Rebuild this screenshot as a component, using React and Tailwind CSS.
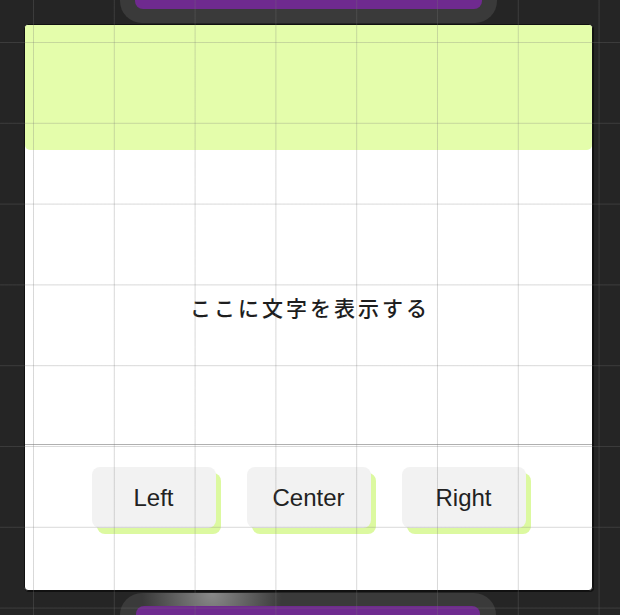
export default function App() {
  const buttons = ['Left', 'Center', 'Right'];
  return (
    <div className="relative h-[615px] w-[620px] overflow-hidden bg-[#252525]">
      <div className="flex flex-col">
        {/* top dock pill */}
        <div className="ml-[120px] h-[23px] w-[377px] rounded-b-[22px] bg-[#3a3a3a] px-[15px]">
          <div className="h-[9px] w-full rounded-b-[8px] bg-[#6f2a8f]" />
        </div>

        {/* card */}
        <div className="ml-[24px] mt-[1px] flex h-[567px] w-[569px] flex-col overflow-hidden rounded-[4px] border border-[#111] bg-white shadow-[1px_1px_0_#111]">
          <div className="h-[125px] shrink-0 rounded-b-[5px] bg-[#e4fdab]" />
          <div className="flex h-[294px] shrink-0 justify-center pt-[143px] pl-[3px]">
            <p className="text-[21px] leading-[28px] font-medium tracking-[3px] text-[#1e1e1e] [font-family:'Noto_Sans_CJK_JP',sans-serif]">
              ここに文字を表示する
            </p>
          </div>
          <div className="flex flex-1 justify-center gap-[31px] border-t border-[#b0b0b0] pt-[22px]">
            {buttons.map(b => (
              <button
                key={b}
                className="h-[61px] w-[124px] rounded-[8px] bg-[#f2f2f2] text-[24px] text-[#222] shadow-[5px_6px_0_#dcf9a0] [font-family:'Liberation_Sans',Arial,sans-serif]"
              >
                {b}
              </button>
            ))}
          </div>
        </div>

        {/* bottom dock pill */}
        <div className="ml-[120px] mt-[2px] h-[30px] w-[376px] rounded-t-[22px] bg-[#3a3a3a] bg-[radial-gradient(circle_at_92px_0px,#8a8a8a_0px,#3a3a3a_70px)] px-[16px] pt-[13px]">
          <div className="h-[20px] w-full rounded-t-[8px] bg-[#6f2a8f]" />
        </div>
      </div>

      {/* grid overlay */}
      <div className="pointer-events-none absolute inset-0 bg-[linear-gradient(to_right,rgba(118,118,118,0.28)_1px,transparent_1px),linear-gradient(to_bottom,rgba(118,118,118,0.28)_1px,transparent_1px)] bg-[size:80.8px_80.8px] bg-[position:33px_42px]" />
    </div>
  );
}
